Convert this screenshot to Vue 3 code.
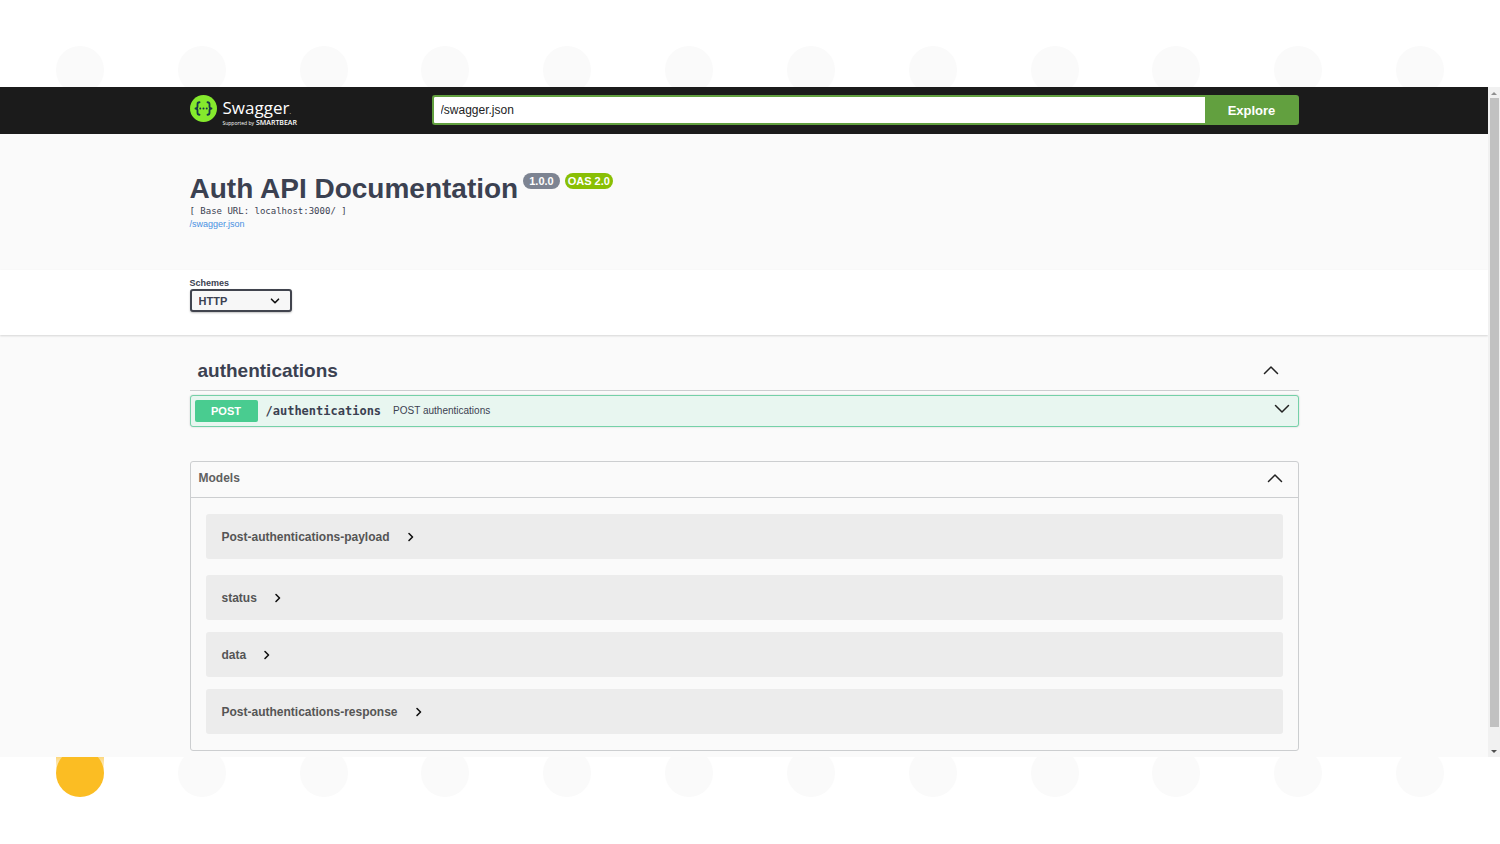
<script setup>
import { ref } from 'vue'

const url = ref('/swagger.json')
const scheme = ref('http')
const models = ['Post-authentications-payload', 'status', 'data', 'Post-authentications-response']
</script>

<template>
  <div class="stage">
    <div class="dots dots-top" aria-hidden="true">
      <span v-for="n in 12" :key="n" class="dot"></span>
    </div>

    <div class="browser">
      <div class="page">
        <header class="topbar">
          <div class="wrap topbar-row">
            <a href="#" class="logo">
              <svg class="logo-mark" viewBox="0 0 54 54" aria-hidden="true">
                <circle cx="27" cy="27" r="27" fill="#85ea2d" />
                <g fill="none" stroke="#173647" stroke-width="3.6">
                  <path d="M19 14.500c-3.500 0-4 1-4 4v4.500c0 2.500-1 4-4 4 3 0 4 1.500 4 4v4.500c0 3 .5 4 4 4" />
                  <path d="M35 14.500c3.500 0 4 1 4 4v4.500c0 2.500 1 4 4 4-3 0-4 1.500-4 4v4.500c0 3-.5 4-4 4" />
                </g>
                <g fill="#173647">
                  <circle cx="20.500" cy="27" r="2" />
                  <circle cx="27" cy="27" r="2" />
                  <circle cx="33.500" cy="27" r="2" />
                </g>
              </svg>
              <span class="logo-words">
                <span class="logo-name">Swagger<small>.</small></span>
                <span class="logo-by">Supported by <b>SMARTBEAR</b></span>
              </span>
            </a>
            <form class="explore" @submit.prevent>
              <input v-model="url" type="text" aria-label="Definition URL" />
              <button type="submit">Explore</button>
            </form>
          </div>
        </header>

        <section class="info">
          <div class="wrap">
            <div class="title-row">
              <h1>Auth API Documentation</h1>
              <span class="badge">1.0.0</span>
              <span class="badge badge-oas">OAS 2.0</span>
            </div>
            <pre class="base-url">[ Base URL: localhost:3000/ ]</pre>
            <a href="#" class="spec-link">/swagger.json</a>
          </div>
        </section>

        <section class="schemes">
          <div class="wrap">
            <label for="scheme">Schemes</label>
            <div class="select-box">
              <select id="scheme" v-model="scheme">
                <option value="http">HTTP</option>
              </select>
              <svg viewBox="0 0 10 10" aria-hidden="true"><path d="M1.500 3.200 5 6.700l3.500-3.500" /></svg>
            </div>
          </div>
        </section>

        <main class="wrap">
          <div class="tag">
            <h2>authentications</h2>
            <button type="button" class="chevron" aria-label="Collapse operations">
              <svg viewBox="0 0 16 10"><path d="M1.500 8.500 8 2l6.500 6.500" /></svg>
            </button>
          </div>
          <div class="operation">
            <span class="method">POST</span>
            <span class="path">/authentications</span>
            <span class="summary">POST authentications</span>
            <button type="button" class="chevron" aria-label="Expand operation">
              <svg viewBox="0 0 16 10"><path d="M1.500 1.500 8 8l6.500-6.500" /></svg>
            </button>
          </div>

          <section class="models">
            <div class="models-head">
              <h3>Models</h3>
              <button type="button" class="chevron" aria-label="Collapse models">
                <svg viewBox="0 0 16 10"><path d="M1.500 8.500 8 2l6.500 6.500" /></svg>
              </button>
            </div>
            <ul>
              <li v-for="m in models" :key="m">
                <button type="button" class="model">
                  <span>{{ m }}</span>
                  <svg viewBox="0 0 8 10" aria-hidden="true"><path d="M2 1.500 5.500 5 2 8.500" /></svg>
                </button>
              </li>
            </ul>
          </section>
        </main>
      </div>

      <div class="scrollbar" aria-hidden="true">
        <svg viewBox="0 0 12 11"><path d="M3 8 6 5l3 3z" fill="#8f8f8f" /></svg>
        <div class="track"><div class="thumb"></div></div>
        <svg viewBox="0 0 12 11"><path d="M3 4h6L6 7z" fill="#505050" /></svg>
      </div>
    </div>

    <div class="dots dots-bottom" aria-hidden="true">
      <span v-for="n in 12" :key="n" class="cell" :class="{ accent: n === 1 }"><span class="dot"></span></span>
    </div>
  </div>
</template>

<style>
body {
  background: #fff;
}
</style>

<style scoped>
* {
  box-sizing: border-box;
}
.stage {
  min-height: 100vh;
  display: flex;
  flex-direction: column;
  font-family: "Liberation Sans", Arial, sans-serif;
  color: #3b4151;
}
.dots {
  display: flex;
  justify-content: space-between;
  padding: 0 56px;
  overflow: hidden;
}
.dots-top {
  height: 87px;
  padding-top: 46px;
}
.dots-bottom {
  flex: 1;
}
.dot {
  display: block;
  flex: none;
  width: 48px;
  height: 48px;
  border-radius: 50%;
  background: #fafafa;
}
.cell {
  display: block;
  height: 40px;
}
.cell .dot {
  margin-top: -8px;
}
.accent {
  background: linear-gradient(#fcd77c, #fff 16px);
}
.accent .dot {
  background: #fbbd23;
}
.browser {
  display: flex;
}
.page {
  flex: 1;
  min-width: 0;
  background: #fafafa;
  padding-bottom: 6px;
}
.wrap {
  width: 100%;
  max-width: 1109px;
  margin: 0 auto;
}
.topbar {
  background: #1b1b1b;
  padding: 8px 0;
}
.topbar-row {
  display: flex;
  align-items: flex-start;
}
.logo {
  flex: none;
  width: 242px;
  height: 31px;
  display: flex;
  align-items: flex-start;
  gap: 6px;
  color: #fff;
  text-decoration: none;
  font-family: "Open Sans", sans-serif;
}
.logo-mark {
  width: 27px;
  height: 27px;
}
.logo-words {
  display: flex;
  flex-direction: column;
}
.logo-name {
  height: 25px;
  font-size: 17px;
  line-height: 25px;
  font-weight: 400;
}
.logo-name small {
  font-size: 6px;
}
.logo-by {
  font-size: 5px;
  line-height: 6px;
  height: 6px;
  display: flex;
  align-items: center;
  gap: 2px;
  white-space: nowrap;
}
.logo-by b {
  font-size: 7px;
  font-weight: 600;
}
.explore {
  flex: 1;
  display: flex;
  height: 30px;
}
.explore input {
  flex: 1;
  min-width: 0;
  border: 2px solid #62a03f;
  border-right: 0;
  border-radius: 3px 0 0 3px;
  padding: 0 7px;
  background: #fff;
  color: #222;
  font: 12px "Liberation Sans", Arial, sans-serif;
  outline: none;
}
.explore button {
  width: 94px;
  border: 0;
  border-radius: 0 3px 3px 0;
  background: #62a03f;
  color: #fff;
  font: bold 13px "Liberation Sans", Arial, sans-serif;
}
.info {
  padding: 39px 0;
}
.title-row {
  display: flex;
  align-items: flex-start;
  gap: 5px;
}
h1,
h2,
h3 {
  margin: 0;
}
h1 {
  font-size: 28px;
  line-height: 32px;
}
.badge {
  height: 16px;
  padding: 0 6px;
  border-radius: 8px;
  background: #7d8492;
  color: #fff;
  font-size: 11px;
  line-height: 16px;
  font-weight: bold;
}
.badge-oas {
  padding: 0 3px;
  background: #89bf04;
}
.base-url {
  margin: 0;
  font: 9px/13px "DejaVu Sans Mono", monospace;
}
.spec-link {
  display: block;
  font-size: 9px;
  line-height: 13px;
  color: #4990e2;
  text-decoration: none;
}
.schemes {
  background: #fff;
  padding: 8px 0 23px;
  box-shadow: 0 1px 2px rgba(0, 0, 0, 0.15);
}
.schemes label {
  display: block;
  font-size: 9px;
  line-height: 11px;
  font-weight: bold;
}
.select-box {
  position: relative;
  width: 102px;
}
.select-box select {
  display: block;
  width: 100%;
  height: 23px;
  appearance: none;
  border: 2px solid #41444e;
  border-radius: 3px;
  padding: 0 7px;
  background: #f7f7f7;
  box-shadow: 0 1px 2px rgba(0, 0, 0, 0.25);
  color: #3b4151;
  font: bold 11px "Liberation Sans", Arial, sans-serif;
}
.select-box svg {
  position: absolute;
  right: 12px;
  top: 7px;
  width: 10px;
  height: 10px;
  pointer-events: none;
}
path {
  stroke-linecap: round;
  stroke-linejoin: round;
}
.select-box path,
.model path {
  fill: none;
  stroke: #111;
  stroke-width: 1.6;
}
.tag {
  display: flex;
  align-items: center;
  justify-content: space-between;
  height: 40px;
  margin-top: 16px;
  padding: 0 20px 0 8px;
  border-bottom: 1px solid #ccced0;
}
.tag h2 {
  font-size: 19px;
  line-height: 24px;
}
.tag .chevron {
  padding-bottom: 2px;
}
.chevron {
  display: block;
  border: 0;
  padding: 0;
  background: none;
}
.chevron svg {
  display: block;
  width: 16px;
  height: 10px;
}
.chevron path {
  fill: none;
  stroke: #222;
  stroke-width: 1.5;
}
.operation {
  display: flex;
  align-items: center;
  height: 32px;
  margin-top: 4px;
  padding: 0 8px 0 4px;
  border: 1px solid #75d1a8;
  border-radius: 3px;
  background: #e8f6f0;
  box-shadow: 0 0 2px rgba(0, 0, 0, 0.19);
}
.operation .chevron {
  margin-left: auto;
  padding-bottom: 4px;
}
.method {
  width: 63px;
  border-radius: 2px;
  background: #49cc90;
  color: #fff;
  font-size: 11px;
  line-height: 22px;
  font-weight: bold;
  text-align: center;
}
.path {
  padding: 0 12px 0 8px;
  font: bold 12px/16px "DejaVu Sans Mono", monospace;
}
.summary {
  font-size: 10px;
  line-height: 16px;
}
.models {
  margin-top: 34px;
  border: 1px solid #ccced0;
  border-radius: 3px;
}
.models-head {
  display: flex;
  align-items: center;
  justify-content: space-between;
  height: 36px;
  padding: 0 15px 3px 8px;
  border-bottom: 1px solid #ccced0;
}
.models-head h3 {
  font-size: 12px;
  line-height: 16px;
  color: #606060;
}
ul {
  list-style: none;
  margin: 0;
  padding: 16px 15px;
}
li + li {
  margin-top: 12px;
}
li:first-child {
  margin-bottom: 16px;
}
li:first-child + li {
  margin-top: 0;
}
.model {
  display: flex;
  align-items: center;
  gap: 17px;
  width: 100%;
  height: 45px;
  border: 0;
  border-radius: 3px;
  padding: 0 16px;
  background: #ececec;
  color: #555;
  font: bold 12px "Liberation Sans", Arial, sans-serif;
}
.model svg {
  width: 8px;
  height: 10px;
}
.scrollbar {
  flex: none;
  width: 12px;
  display: flex;
  flex-direction: column;
  background: #f1f1f1;
}
.scrollbar svg {
  flex: none;
  width: 12px;
  height: 11px;
}
.track {
  flex: 1;
  padding: 0 1px 0 2px;
}
.thumb {
  height: 97%;
  background: #c1c1c1;
}
</style>
